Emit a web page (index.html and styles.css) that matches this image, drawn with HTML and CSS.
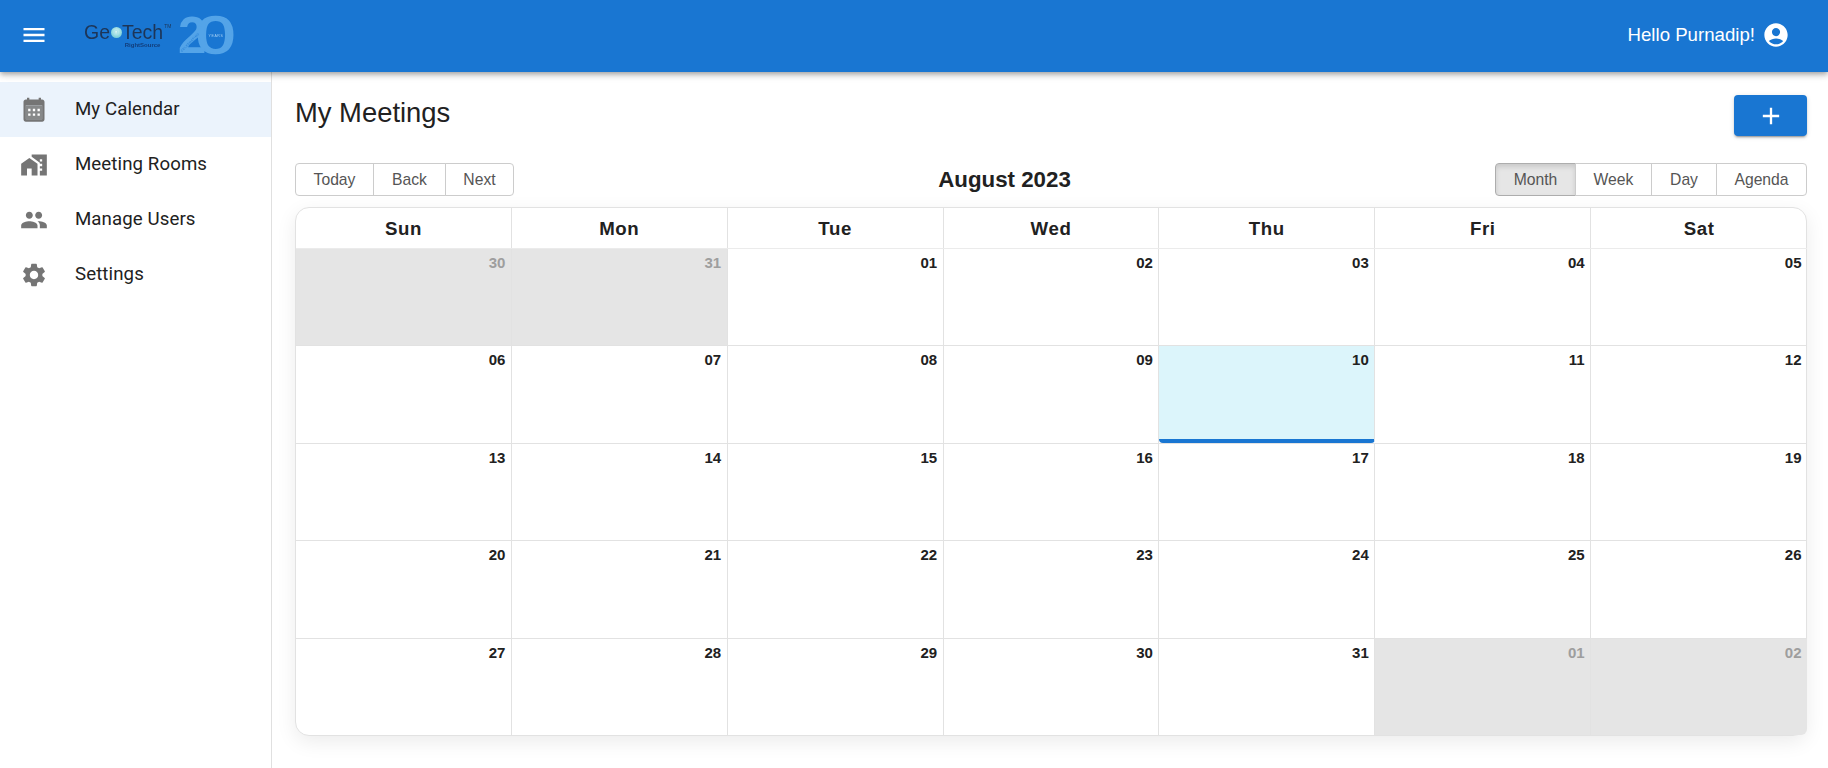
FILE: index.html
```html
<!DOCTYPE html>
<html lang="en">
<head>
<meta charset="utf-8">
<title>My Meetings</title>
<link rel="stylesheet" href="styles.css">
</head>
<body>
<header class="appbar">
  <button class="menu-btn" aria-label="menu"><svg class="icon white" viewBox="0 0 24 24"><path d="M3 18h18v-2H3v2zm0-5h18v-2H3v2zm0-7v2h18V6H3z"/></svg></button>
  <div class="logo">
    <span class="logo-mark">
      <span class="logo-name">Ge<span class="logo-o">o</span>Tech<sup class="logo-tm">TM</sup></span>
      <span class="logo-sub">RightSource</span>
    </span>
    <svg class="logo-twenty" viewBox="0 0 58 38" width="58" height="38">
      <text class="twenty-glyph" x="0" y="37">2</text>
      <text class="twenty-zero" transform="translate(18 37) scale(1.380 1)" x="0" y="0">0</text>
      <text class="twenty-years" x="38" y="20.500" text-anchor="middle">YEARS</text>
      <text class="twenty-cele" transform="translate(4 36) rotate(-46)" x="0" y="0">CELEBRATING</text>
    </svg>
  </div>
  <div class="user">
    <span class="user-name">Hello Purnadip!</span>
    <svg class="icon white" viewBox="0 0 24 24"><path d="M12 2C6.480 2 2 6.480 2 12s4.480 10 10 10 10-4.480 10-10S17.520 2 12 2zm0 4c1.930 0 3.500 1.570 3.500 3.500S13.930 13 12 13s-3.500-1.570-3.500-3.500S10.070 6 12 6zm0 14c-2.030 0-4.430-.820-6.140-2.880C7.550 15.800 9.680 15 12 15s4.450.800 6.140 2.120C16.430 19.180 14.030 20 12 20z"/></svg>
  </div>
</header>
<div class="shell">
  <nav class="sidebar">
    <a class="nav-item active"><svg class="icon" viewBox="0 0 24 24"><path fill-rule="evenodd" d="M19 3h-1V1.500h-2V3H8V1.500H6V3H5C3.900 3 3 3.900 3 5v15c0 1.100.9 2 2 2h14c1.100 0 2-.9 2-2V5c0-1.100-.9-2-2-2zM5 8h14v12H5V8z"/><path opacity=".85" d="M5 8h14v12H5z"/><path fill="#fff" d="M7 11h2v2H7zm4 0h2v2h-2zm4 0h2v2h-2zm-8 4h2v2H7zm4 0h2v2h-2zm4 0h2v2h-2z"/></svg><span class="nav-text">My Calendar</span></a>
    <a class="nav-item"><svg class="icon" viewBox="0 0 24 24"><path d="M1 11v10h5v-6h4v6h5V11L8 6z"/><path d="M10 3v1.970l7 5V11h2v2h-2v2h2v2h-2v4h6V3H10zm9 6h-2V7h2v2z"/></svg><span class="nav-text">Meeting Rooms</span></a>
    <a class="nav-item"><svg class="icon" viewBox="0 0 24 24"><path d="M16 11c1.660 0 2.990-1.340 2.990-3S17.660 5 16 5c-1.660 0-3 1.340-3 3s1.340 3 3 3zm-8 0c1.660 0 2.990-1.340 2.990-3S9.660 5 8 5C6.340 5 5 6.340 5 8s1.340 3 3 3zm0 2c-2.330 0-7 1.170-7 3.500V19h14v-2.500c0-2.330-4.670-3.500-7-3.500zm8 0c-.290 0-.620.020-.970.050 1.160.840 1.970 1.970 1.970 3.450V19h6v-2.500c0-2.330-4.670-3.500-7-3.500z"/></svg><span class="nav-text">Manage Users</span></a>
    <a class="nav-item"><svg class="icon" viewBox="0 0 24 24"><path d="M19.140 12.940c.040-.300.060-.610.060-.940 0-.320-.020-.640-.070-.940l2.030-1.580c.180-.140.230-.410.120-.610l-1.920-3.320c-.120-.220-.370-.290-.590-.220l-2.390.960c-.500-.380-1.030-.700-1.620-.940l-.360-2.540c-.040-.240-.240-.410-.480-.410h-3.840c-.240 0-.430.170-.470.410l-.360 2.540c-.590.240-1.130.570-1.620.940l-2.390-.960c-.220-.080-.470 0-.590.220L2.740 8.870c-.120.210-.080.470.120.610l2.030 1.580c-.050.300-.090.630-.090.940s.020.640.070.940l-2.030 1.580c-.180.140-.230.410-.120.610l1.920 3.320c.120.220.370.290.590.220l2.390-.960c.500.380 1.030.700 1.620.940l.360 2.540c.050.240.240.410.480.410h3.840c.240 0 .440-.170.470-.410l.360-2.540c.590-.240 1.130-.560 1.620-.940l2.390.960c.220.080.470 0 .590-.220l1.920-3.320c.120-.220.070-.470-.120-.610l-2.010-1.580zM12 15.600c-1.980 0-3.600-1.620-3.600-3.600s1.620-3.600 3.600-3.600 3.600 1.620 3.600 3.600-1.620 3.600-3.600 3.600z"/></svg><span class="nav-text">Settings</span></a>
  </nav>
  <main class="content">
    <div class="title-row">
      <h1 class="page-title">My Meetings</h1>
      <button class="add-btn" aria-label="add"><svg class="icon white" viewBox="0 0 24 24"><path d="M19 13h-6v6h-2v-6H5v-2h6V5h2v6h6v2z"/></svg></button>
    </div>
    <div class="toolbar">
      <div class="btn-group">
        <button class="tb-btn b-today">Today</button><button class="tb-btn b-back">Back</button><button class="tb-btn b-next">Next</button>
      </div>
      <div class="cal-label">August 2023</div>
      <div class="btn-group">
        <button class="tb-btn b-month on">Month</button><button class="tb-btn b-week">Week</button><button class="tb-btn b-day">Day</button><button class="tb-btn b-agenda">Agenda</button>
      </div>
    </div>
    <div class="calendar">
      <div class="cal-head">
        <div class="head-cell">Sun</div><div class="head-cell">Mon</div><div class="head-cell">Tue</div><div class="head-cell">Wed</div><div class="head-cell">Thu</div><div class="head-cell">Fri</div><div class="head-cell">Sat</div>
      </div>
      <div class="cal-row first">
        <div class="day off">30</div><div class="day off">31</div><div class="day">01</div><div class="day">02</div><div class="day">03</div><div class="day">04</div><div class="day">05</div>
      </div>
      <div class="cal-row">
        <div class="day">06</div><div class="day">07</div><div class="day">08</div><div class="day">09</div><div class="day today">10</div><div class="day">11</div><div class="day">12</div>
      </div>
      <div class="cal-row">
        <div class="day">13</div><div class="day">14</div><div class="day">15</div><div class="day">16</div><div class="day">17</div><div class="day">18</div><div class="day">19</div>
      </div>
      <div class="cal-row">
        <div class="day">20</div><div class="day">21</div><div class="day">22</div><div class="day">23</div><div class="day">24</div><div class="day">25</div><div class="day">26</div>
      </div>
      <div class="cal-row last">
        <div class="day">27</div><div class="day">28</div><div class="day">29</div><div class="day">30</div><div class="day">31</div><div class="day off">01</div><div class="day off">02</div>
      </div>
    </div>
  </main>
</div>
</body>
</html>
```
FILE: styles.css
```css
* { box-sizing: border-box; }
html, body { margin: 0; height: 100%; overflow: hidden; }
body { font-family: "Liberation Sans", Arial, sans-serif; color: #212121; background: #fff; display: flex; flex-direction: column; }
button { font-family: inherit; }
.icon { width: 28px; height: 28px; fill: #757575; display: block; flex: none; }
.icon.white { fill: #fff; }

.appbar { height: 72px; flex: none; background: #1976d2; display: flex; align-items: center; padding: 0 38px 2px 20px; box-shadow: 0 2px 4px -1px rgba(0,0,0,.2), 0 4px 5px rgba(0,0,0,.14), 0 1px 10px rgba(0,0,0,.12); position: relative; z-index: 2; }
.menu-btn { background: none; border: 0; padding: 0; width: 28px; height: 28px; }
.logo { display: flex; align-items: center; margin-left: 36px; gap: 7px; filter: blur(.4px); }
.logo-mark { display: flex; flex-direction: column; align-items: flex-end; }
.logo-name { font-size: 19.500px; line-height: 18px; color: #1d3557; white-space: nowrap; display: flex; align-items: center; }
.logo-o { width: 11px; height: 11px; margin: 2px .5px 0; border-radius: 50%; background: radial-gradient(circle at 50% 40%, #d8f4f4, #54c0cc); color: #a6e3e8; font-size: 9px; line-height: 10px; text-align: center; }
.logo-tm { font-size: 5px; line-height: 5px; margin: -10px 0 0 1px; }
.logo-sub { font-size: 6px; line-height: 6px; font-weight: 700; color: #123d7a; margin: 1px 11px 0 0; }
.logo-twenty { display: block; flex: none; overflow: visible; }
.twenty-glyph { font-family: "Liberation Sans", sans-serif; font-size: 51px; font-weight: 700; fill: #54a4e8; }
.twenty-zero { font-family: "Liberation Sans", sans-serif; font-size: 51px; font-weight: 400; fill: #54a4e8; stroke: #54a4e8; stroke-width: 1.500px; }
.twenty-years { font-family: "Liberation Sans", sans-serif; font-size: 3.500px; letter-spacing: .6px; fill: #a9d2f5; }
.twenty-cele { font-family: "Liberation Sans", sans-serif; font-size: 3px; letter-spacing: .4px; fill: #1976d2; }
.user { margin-left: auto; display: flex; align-items: center; gap: 7px; }
.user-name { color: #fff; font-size: 18.650px; }

.shell { flex: 1; display: flex; min-height: 0; }
.sidebar { width: 272px; flex: none; border-right: 1px solid #e0e0e0; padding-top: 10px; display: flex; flex-direction: column; }
.nav-item { height: 55px; display: flex; align-items: center; gap: 27px; padding-left: 20px; font-size: 18.650px; letter-spacing: .1px; color: #212121; font-family: Roboto, sans-serif; }
.nav-item.active { background: #ebf3fc; }
.nav-text { padding-bottom: 2px; }

.content { flex: 1; min-width: 0; padding: 23px 21px 0 23px; }
.title-row { display: flex; justify-content: space-between; align-items: flex-start; height: 68px; }
.page-title { margin: 0; font-weight: 400; font-size: 27.400px; line-height: 36px; color: #212121; }
.add-btn { width: 73px; height: 41px; background: #1976d2; border: 0; border-radius: 4px; display: flex; align-items: center; justify-content: center; box-shadow: 0 3px 1px -2px rgba(0,0,0,.2), 0 2px 2px rgba(0,0,0,.14), 0 1px 5px rgba(0,0,0,.12); }

.toolbar { height: 33px; margin-bottom: 11px; display: flex; justify-content: space-between; align-items: center; }
.btn-group { display: flex; height: 33px; }
.tb-btn { height: 33px; background: #fff; border: 1px solid #ccc; margin-left: -1px; padding: 0; font-size: 15.700px; color: #555; }
.tb-btn:first-child { margin-left: 0; border-radius: 4px 0 0 4px; }
.tb-btn:last-child { border-radius: 0 4px 4px 0; }
.tb-btn.on { background: #e6e6e6; box-shadow: inset 0 3px 5px rgba(0,0,0,.125); border-color: #adadad; }
.b-today { width: 79px; }
.b-back { width: 73px; }
.b-next { width: 69px; }
.b-month { width: 81px; }
.b-week { width: 77px; }
.b-day { width: 66px; }
.b-agenda { width: 91px; }
.cal-label { font-size: 22.300px; font-weight: 700; color: #212121; text-align: center; }

.calendar { height: 529px; border: 1px solid #e2e2e2; border-radius: 14px; display: flex; flex-direction: column; box-shadow: 0 6px 20px rgba(0,0,0,.08); background: #fff; }
.cal-head { height: 41px; flex: none; display: grid; grid-template-columns: repeat(7, 1fr); margin-right: -1px; border-bottom: 1px solid #ebebeb; }
.head-cell { display: flex; align-items: center; justify-content: center; padding-top: 1px; font-size: 18.650px; font-weight: 700; letter-spacing: .6px; color: #212121; border-right: 1px solid #e2e2e2; }
.head-cell:last-child { border-right: 0; }
.cal-row { flex: 1; display: grid; grid-template-columns: repeat(7, 1fr); margin-right: -1px; border-top: 1px solid #e2e2e2; }
.cal-row.first { border-top: 0; }
.day { border-right: 1px solid #e2e2e2; text-align: right; padding: 5px 5.500px 0 0; font-size: 15px; line-height: 18px; font-weight: 700; color: #212121; }
.day:last-child { border-right: 0; }
.day.off { background: #e5e5e5; color: #9e9e9e; }
.day.today { background: #dcf5fb; border-bottom: 4px solid #1976d2; border-radius: 0 0 4px 4px; }
.cal-row.last .day:last-child { border-radius: 0 0 6px 0; }
```
